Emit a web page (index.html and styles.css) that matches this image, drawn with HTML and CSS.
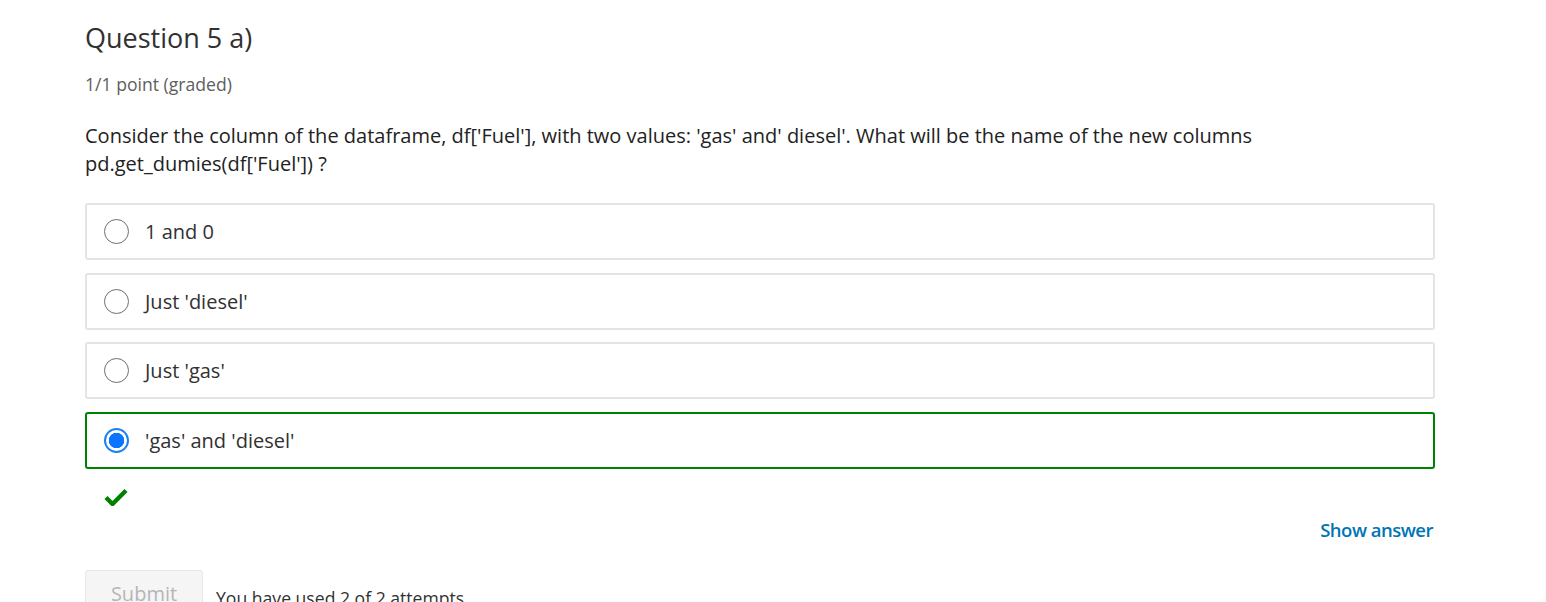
FILE: index.html
```html
<!DOCTYPE html>
<html>
<head>
<meta charset="utf-8">
<link rel="stylesheet" href="styles.css">
</head>
<body>
<div class="problem">
  <h3 class="title">Question 5 a)</h3>
  <div class="points">1/1 point (graded)</div>
  <p class="prompt">Consider the column of the dataframe, df['Fuel'], with two values: 'gas' and' diesel'. What will be the name of the new columns pd.get_dumies(df['Fuel']) ?</p>
  <div class="choices">
    <label class="choice"><span class="radio"></span><span class="label">1 and 0</span></label>
    <label class="choice"><span class="radio"></span><span class="label">Just 'diesel'</span></label>
    <label class="choice"><span class="radio"></span><span class="label">Just 'gas'</span></label>
    <label class="choice correct"><span class="radio checked"></span><span class="label">'gas' and 'diesel'</span></label>
  </div>
  <div class="status">
    <svg width="24" height="18" viewBox="0 0 24 18"><path d="M2 9.5 L8.5 16 L22 2.5" fill="none" stroke="#008100" stroke-width="4.4" stroke-linejoin="miter"/></svg>
  </div>
  <div class="actions-top">
    <a class="show-answer">Show answer</a>
  </div>
  <div class="actions">
    <button class="submit">Submit</button>
    <span class="attempts">You have used 2 of 2 attempts</span>
  </div>
</div>
</body>
</html>
```
FILE: styles.css
```css
html, body {
  margin: 0;
  padding: 0;
  background: #fff;
  font-family: "Open Sans", "Liberation Sans", sans-serif;
  color: #313131;
}
.problem {
  width: 1350px;
  margin-left: 85px;
  padding-top: 20px;
}
.title {
  margin: 0;
  font-size: 27px;
  font-weight: 400;
  line-height: 36px;
  color: #313131;
}
.points {
  margin-top: 16px;
  font-size: 17.6px;
  line-height: 24px;
  color: #5e5e5e;
}
.prompt {
  margin: 26px 0 0 0;
  font-size: 20px;
  line-height: 28px;
  color: #222;
}
.choices {
  margin-top: 25px;
  display: flex;
  flex-direction: column;
  gap: 13px;
}
.choice {
  display: flex;
  align-items: center;
  height: 53px;
  border: 2px solid #e4e4e4;
  border-radius: 3px;
  padding: 0 0 0 17px;
}
.choice:nth-child(3) {
  margin-top: -1px;
}
.choice.correct {
  border-color: #008100;
}
.radio {
  width: 25px;
  height: 25px;
  border: 1.5px solid #6e6e6e;
  border-radius: 50%;
  box-sizing: border-box;
  flex: none;
}
.radio.checked {
  border: 2px solid #1b80f2;
  background: radial-gradient(circle, #0a75ff 0 7.5px, #fff 8px);
}
.label {
  margin-left: 16px;
  font-size: 20px;
  color: #313131;
}
.status {
  margin-top: 19px;
  padding-left: 19px;
  height: 22px;
}
.actions-top {
  display: flex;
  justify-content: flex-end;
  margin-top: 7px;
}
.show-answer {
  font-size: 18.5px;
  font-weight: 600;
  letter-spacing: -0.5px;
  color: #0075b4;
  padding-right: 2px;
}
.actions {
  margin-top: 28px;
  display: flex;
  align-items: flex-end;
  gap: 13px;
}
.submit {
  width: 118px;
  height: 50px;
  background: #f5f5f5;
  border: 1px solid #e7e7e7;
  border-radius: 3px;
  font-family: "Open Sans", "Liberation Sans", sans-serif;
  font-size: 20px;
  color: #b5b5b5;
  padding: 0;
  padding-bottom: 4px;
}
.attempts {
  font-size: 17.6px;
  color: #313131;
  margin-bottom: 10px;
}
```
